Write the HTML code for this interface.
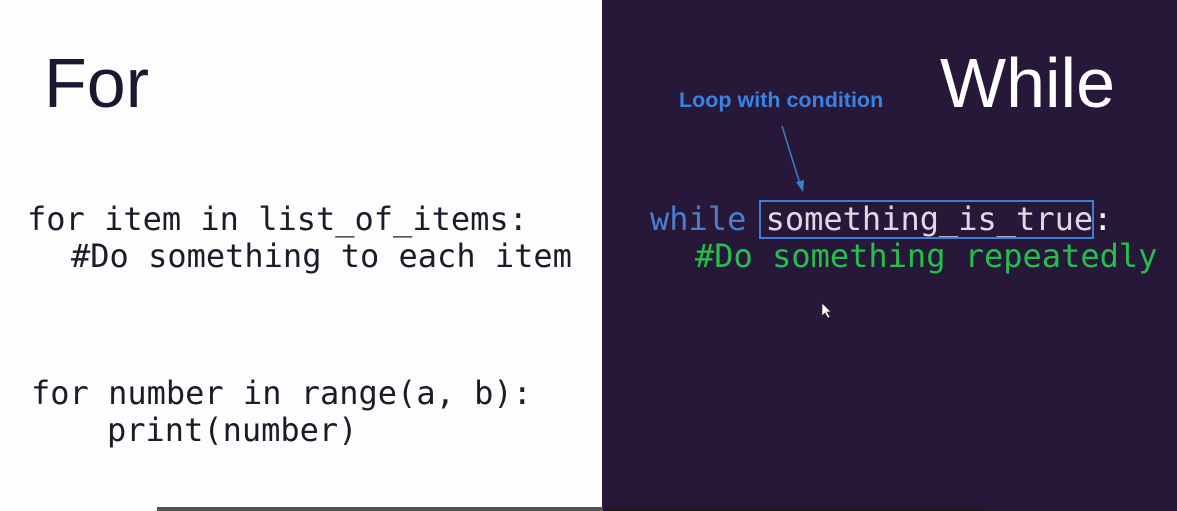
<!DOCTYPE html>
<html><head><style>
body{margin:0;width:1177px;height:511px;overflow:hidden;position:relative;background:#fdfdfe;font-family:"Liberation Sans",sans-serif}
.dark{position:absolute;left:602px;top:0;width:575px;height:511px;background:#27183a}
.m{position:absolute;font-family:"DejaVu Sans Mono",monospace;font-size:32px;white-space:pre;line-height:45px}
.t{position:absolute;font-size:70px;line-height:1}
</style></head><body>
<div class="dark"></div>
<div class="t" style="left:44px;top:48px;color:#1e1530">For</div>
<div class="t" style="left:940px;top:48px;color:#fff">While</div>
<div class="m" style="left:27px;top:197px;color:#1e1a2a">for item in list_of_items:</div>
<div class="m" style="left:71px;top:234px;color:#1e1a2a">#Do something to each item</div>
<div class="m" style="left:31px;top:371px;color:#1e1a2a">for number in range(a, b):</div>
<div class="m" style="left:107px;top:408px;color:#1e1a2a">print(number)</div>
<div class="m" style="left:650px;top:197px;color:#e0d8e6"><span style="color:#4a7fcf">while</span> something_is_true<span style="color:#fff">:</span></div>
<div class="m" style="left:695px;top:234px;color:#22c04a">#Do something repeatedly</div>
<div style="position:absolute;left:759px;top:200px;width:331px;height:35px;border:2px solid #3b7fd0"></div>
<div style="position:absolute;left:679px;top:88px;font-weight:bold;font-size:21.5px;color:#3b82e0">Loop with condition</div>
<svg style="position:absolute;left:0;top:0" width="1177" height="511">
<line x1="782" y1="126" x2="800" y2="184" stroke="#3b7fd0" stroke-width="1.5"/>
<polygon points="803,192 796,182 804,180" fill="#3b7fd0"/>
<polygon points="822,303 822,316 825,313 828,318 830,317 827,312 831,312" fill="#fff" stroke="#333" stroke-width="0.7"/>
</svg>
<div style="position:absolute;left:157px;top:507px;width:446px;height:4px;background:#555"></div>
<div style="position:absolute;left:603px;top:507px;width:382px;height:4px;background:#1e1a24"></div>
</body></html>
